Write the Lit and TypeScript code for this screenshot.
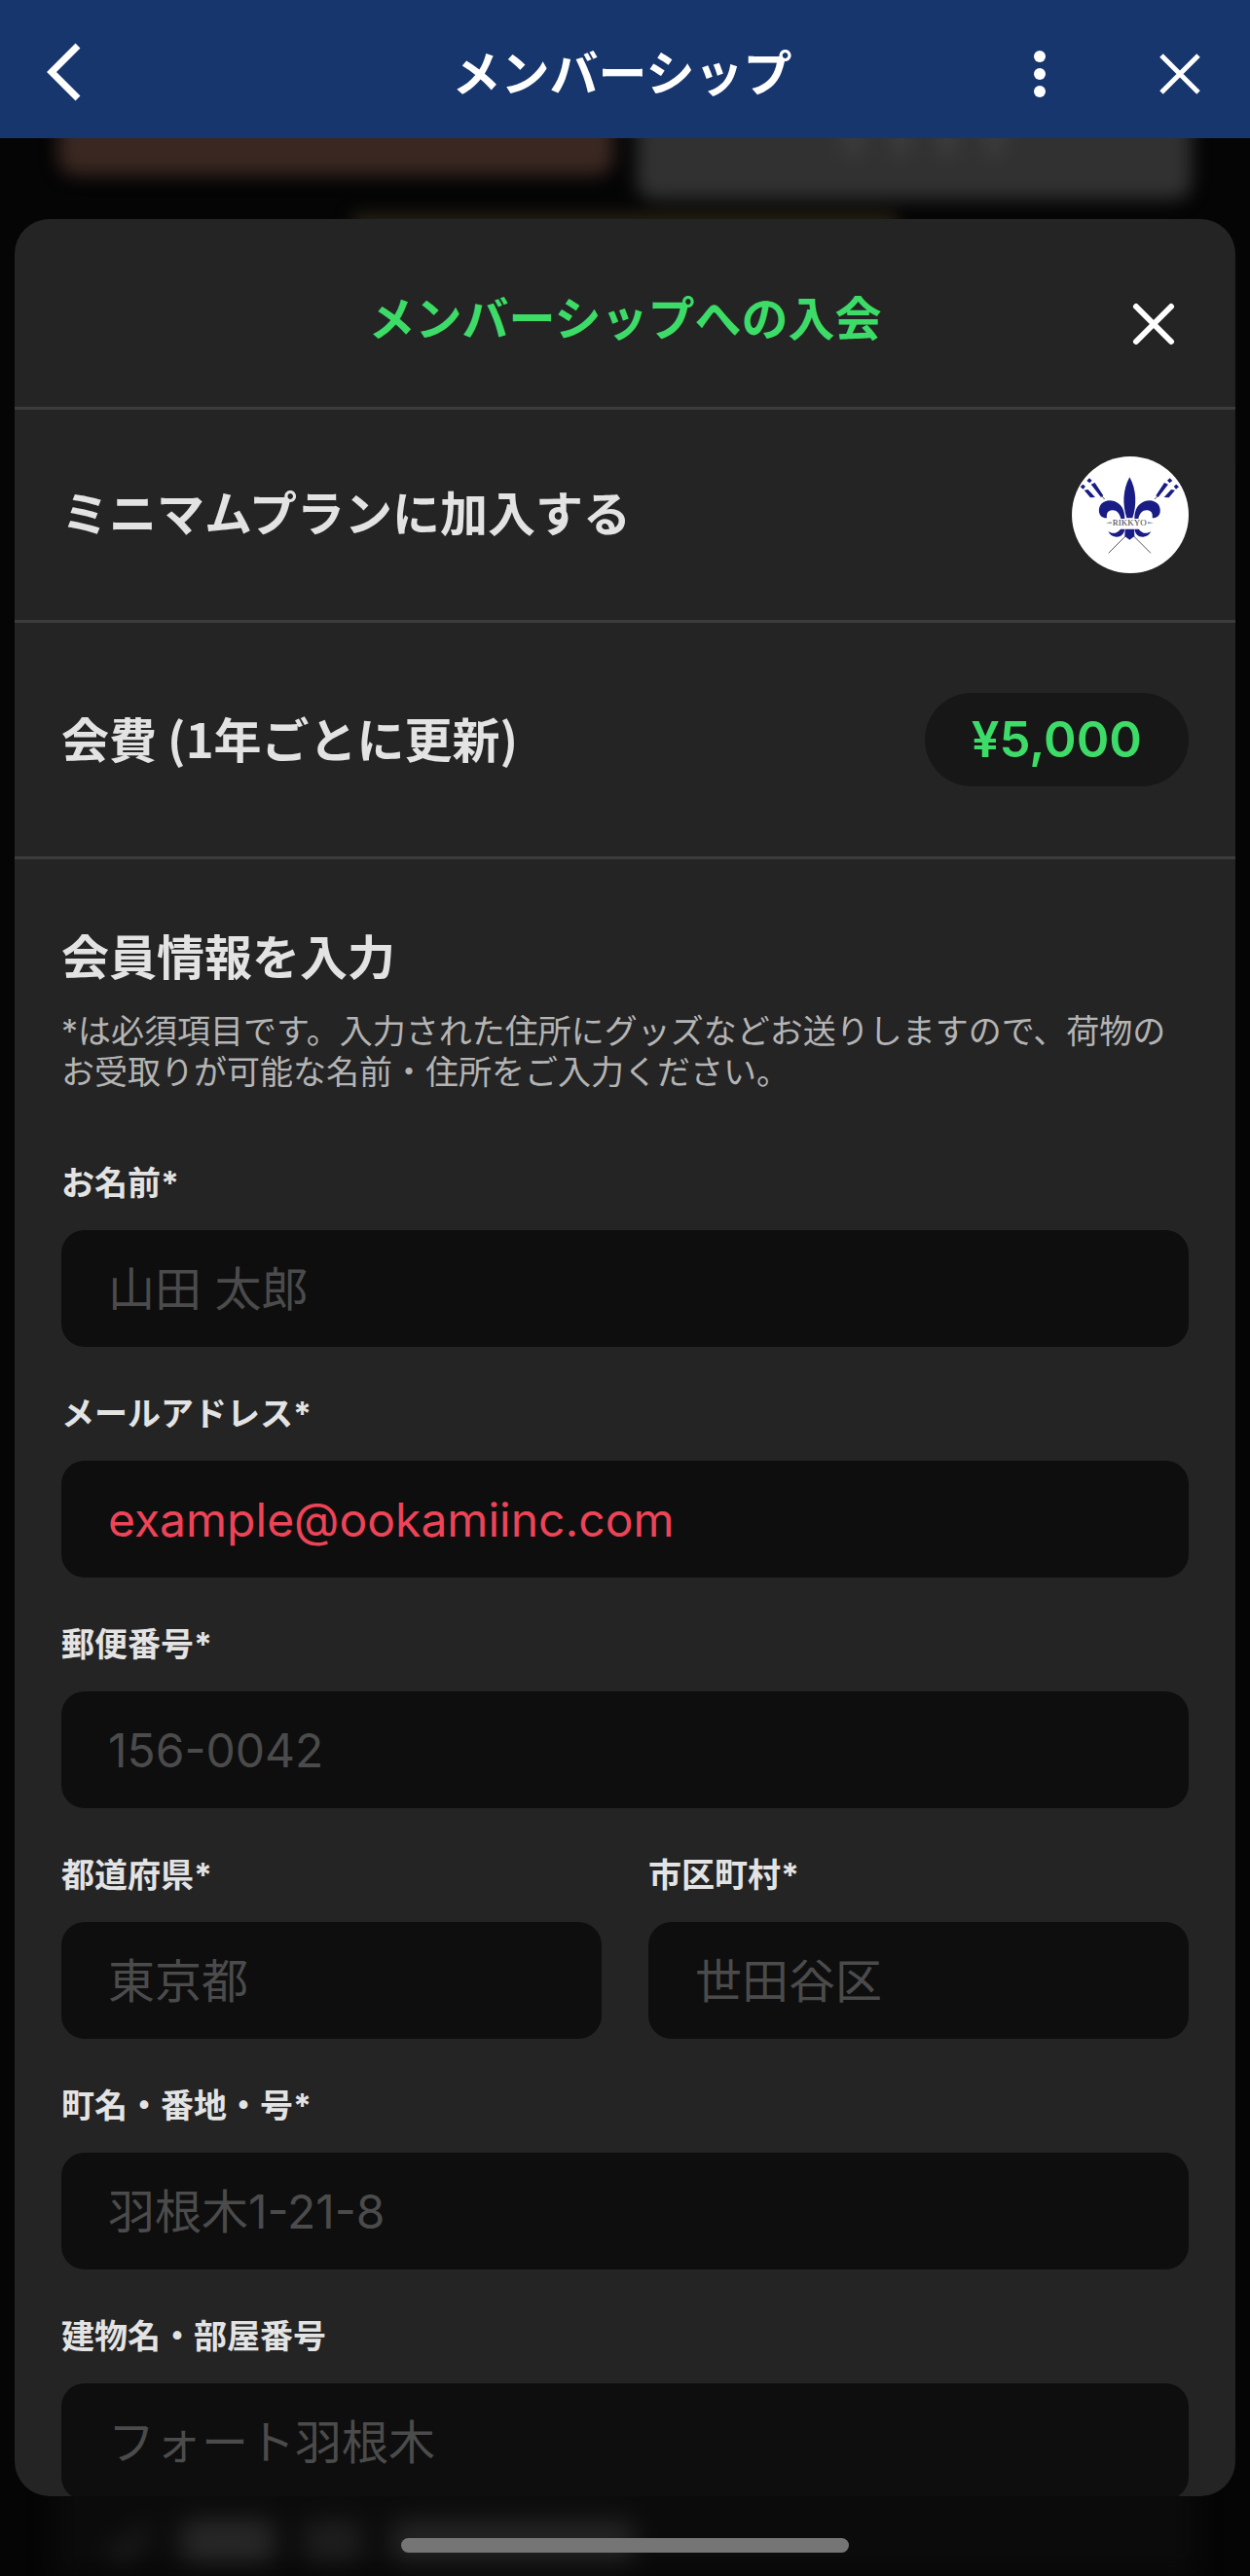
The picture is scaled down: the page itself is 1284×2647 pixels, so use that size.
import { LitElement, html, css, svg } from "lit";
import { customElement, property } from "lit/decorators.js";

@customElement("club-emblem")
class ClubEmblem extends LitElement {
  static styles = css`
    :host { display: block; width: 120px; height: 120px; flex: none; }
    .disc { display: block; width: 100%; height: 100%; }
    .ink { fill: #191c85; }
    .lance { stroke: #55565e; stroke-width: 3; }
    .name { font-family: "Liberation Serif", serif; font-size: 27px; fill: #3c3c46; text-anchor: middle; }
  `;

  render() {
    const half = svg`
      <path class="ink" d="M54 67 L62 74 L55 82 L46 75Z M34 86 L42 92 L35 101 L26 94Z"/>
      <path class="ink" d="M59 86 L71 81 L97 121 L90 126Z M38 104 L50 102 L72 126 L57 127Z"/>
      <line class="lance" x1="92" y1="122" x2="101" y2="132"/>
      <line class="lance" x1="165" y1="246" x2="113" y2="298"/>
      <path class="ink" d="M84 172 C80 145 105 129 131 138 C153 146 163 165 163 192 L151 192 C147 174 137 165 124 166 C111 167 106 176 108 190 C95 191 86 184 84 172Z"/>
      <path class="ink" d="M112 231 C125 240 140 238 150 224 L163 224 C161 239 151 249 136 248 C124 247 117 241 112 231Z"/>
      <path d="M104 205 L122 202 L122 208Z" fill="#8c8c96"/>
    `;
    return html`
      <svg class="disc" viewBox="0 0 360 360" role="img" aria-label="RIKKYO">
        <circle cx="180" cy="180" r="180" fill="#fff"/>
        <g>${half}</g>
        <g transform="translate(356 0) scale(-1 1)">${half}</g>
        <path class="ink" d="M178 64 C156 104 156 150 169 190 L187 190 C200 150 200 104 178 64Z"/>
        <path class="ink" d="M164 224 L192 224 L193 246 L178 257 L163 246Z"/>
        <text class="name" x="178" y="214">RIKKYO</text>
      </svg>
    `;
  }
}

@customElement("form-field")
class FormField extends LitElement {
  @property() label = "";
  @property() hint = "";
  @property() type = "text";
  @property({ type: Boolean }) invalid = false;

  static styles = css`
    :host { display: block; min-width: 0; }
    .field { display: flex; flex-direction: column; gap: 27px; }
    .label { font-size: 34px; line-height: 42px; font-weight: 700; color: #e3e3e3; }
    .box {
      box-sizing: border-box; width: 100%; height: 120px; padding: 0 48px;
      border: 0; border-radius: 24px; outline: 0; background: #0e0e0e; color: #e3e3e3;
      font-family: Inter, "Noto Sans CJK JP", sans-serif; font-size: 48px; font-weight: 400;
    }
    .box::placeholder { color: #4b4b4b; opacity: 1; }
    .invalid::placeholder { color: #ee4458; }
  `;

  render() {
    return html`
      <div class="field">
        <label class="label" for="control">${this.label}</label>
        <input id="control" class="box ${this.invalid ? "invalid" : ""}" type=${this.type}
          placeholder=${this.hint} aria-invalid=${this.invalid ? "true" : "false"}>
      </div>
    `;
  }
}

@customElement("app-root")
class AppRoot extends LitElement {
  static styles = css`
    :host {
      display: flex; flex-direction: column; height: 100vh; overflow: hidden;
      background: #050505; color: #e3e3e3;
      font-family: Inter, "Noto Sans CJK JP", sans-serif;
    }
    button { padding: 0; border: 0; background: none; color: #fff; cursor: pointer; }
    svg { display: block; }
    h1, h2, h3, p { margin: 0; }

    .bar {
      flex: none; box-sizing: border-box; height: 142px; padding: 10px 42px 0 36px;
      display: grid; grid-template-columns: 1fr auto 1fr; align-items: center;
      background: #17366d; color: #fff;
    }
    .bar-title { font-size: 50px; line-height: 60px; font-weight: 700; }
    .actions { display: flex; justify-content: flex-end; gap: 84px; }

    .stage { flex: 1; min-height: 0; display: grid; grid-template: minmax(0, 1fr) / minmax(0, 1fr); }
    .behind, .sheet { grid-area: 1 / 1; }

    .behind { z-index: 0; display: flex; flex-direction: column; justify-content: space-between; overflow: hidden; }
    .tiles { display: grid; grid-template-columns: 1fr 1fr; gap: 24px; padding: 0 60px; align-items: start; filter: blur(9px); }
    .tile { margin-top: -40px; height: 78px; border-radius: 18px; background: #3a2721; }
    .tile-tall { box-sizing: border-box; height: 103px; padding: 10px 0 0 20px; background: #313131; display: flex; justify-content: center; align-items: flex-start; gap: 26px; }
    .smudge { width: 22px; height: 48px; background: #3b3b3b; }
    .rule { grid-column: 1 / -1; justify-self: center; width: 48%; height: 60px; margin-top: -8px; background: #2b2616; }
    .list { margin: 0 56px; height: 200px; padding: 142px 36px 0 54px; box-sizing: border-box; background: #0b0b0c; display: flex; gap: 30px; align-items: flex-start; filter: blur(12px); }
    .tick { width: 46px; height: 46px; }
    .line { height: 44px; border-radius: 12px; background: #1d1d1d; }
    .w1 { width: 96px; background: #272727; }
    .w2 { width: 60px; }
    .w3 { width: 250px; background: #232323; }

    .sheet {
      z-index: 1; margin: 83px 15px 82px; border-radius: 36px; background: #242424;
      overflow-x: hidden; overflow-y: auto; scrollbar-width: none;
    }
    .head, .row { border-bottom: 3px solid #3c3c3c; }
    .head {
      box-sizing: border-box; height: 196px; padding: 18px 60px 0;
      display: grid; grid-template-columns: 1fr auto 1fr; align-items: center;
    }
    .head-title { grid-column: 2; padding-bottom: 6px; font-size: 48px; line-height: 60px; font-weight: 700; color: #3ddc68; }
    .close { justify-self: end; padding-top: 4px; }
    .row { display: flex; justify-content: space-between; align-items: center; padding: 48px; }
    .fee { padding-block: 72px; }
    .row-title { font-size: 49px; line-height: 60px; font-weight: 700; }
    .fee-title { padding-bottom: 4px; font-family: "Noto Sans CJK JP", sans-serif; }
    .price {
      padding: 0 48px; border-radius: 48px; background: #171717; color: #3ddc68;
      font-size: 51px; line-height: 96px; font-weight: 600;
    }
    .form { display: flex; flex-direction: column; gap: 72px; padding: 72px 48px 48px; }
    .intro { display: flex; flex-direction: column; gap: 24px; }
    .note { font-size: 34px; line-height: 42px; font-weight: 400; color: #b4b4b4; }
    .fields { display: grid; grid-template-columns: 1fr 1fr; gap: 48px; }
    .wide { grid-column: 1 / -1; }

    .home {
      position: absolute; z-index: 2; left: 50%; bottom: 24px; transform: translateX(-50%);
      width: 460px; height: 15px; border-radius: 8px; background: #757575;
    }
  `;

  render() {
    return html`
      <header class="bar">
        <div>
          <button aria-label="戻る">
            <svg width="60" height="72" viewBox="0 0 60 72" fill="none" stroke="#fff" stroke-width="7"><path d="M44 9 L17 36 L44 63"/></svg>
          </button>
        </div>
        <h1 class="bar-title">メンバーシップ</h1>
        <div class="actions">
          <button aria-label="メニュー">
            <svg width="60" height="60" viewBox="0 0 60 60" fill="#fff"><circle cx="30" cy="12" r="6"/><circle cx="30" cy="30" r="6"/><circle cx="30" cy="48" r="6"/></svg>
          </button>
          <button aria-label="閉じる">
            <svg width="60" height="60" viewBox="0 0 60 60" fill="none" stroke="#fff" stroke-width="5"><path d="M11 11 L49 49 M49 11 L11 49"/></svg>
          </button>
        </div>
      </header>
      <main class="stage">
        <div class="behind" aria-hidden="true">
          <div class="tiles">
            <div class="tile"></div>
            <div class="tile tile-tall">
              <span class="smudge"></span><span class="smudge"></span><span class="smudge"></span><span class="smudge"></span>
            </div>
            <div class="rule"></div>
          </div>
          <div class="list">
            <svg class="tick" viewBox="0 0 46 46" fill="none" stroke="#2a2a2a" stroke-width="8"><path d="M4 26 L16 38 L42 8"/></svg>
            <span class="line w1"></span><span class="line w2"></span><span class="line w3"></span>
          </div>
        </div>
        <section class="sheet" role="dialog" aria-labelledby="sheet-title">
          <div class="head">
            <h2 class="head-title" id="sheet-title">メンバーシップへの入会</h2>
            <button class="close" aria-label="閉じる">
              <svg width="48" height="48" viewBox="0 0 48 48" fill="none" stroke="#fff" stroke-width="6" stroke-linecap="round"><path d="M6 6 L42 42 M42 6 L6 42"/></svg>
            </button>
          </div>
          <div class="row">
            <h3 class="row-title">ミニマムプランに加入する</h3>
            <club-emblem></club-emblem>
          </div>
          <div class="row fee">
            <h3 class="row-title fee-title">会費 (1年ごとに更新)</h3>
            <span class="price">¥5,000</span>
          </div>
          <form class="form">
            <div class="intro">
              <h3 class="row-title">会員情報を入力</h3>
              <p class="note">*は必須項目です。入力された住所にグッズなどお送りしますので、荷物のお受取りが可能な名前・住所をご入力ください。</p>
            </div>
            <div class="fields">
              <form-field class="wide" label="お名前*" hint="山田 太郎"></form-field>
              <form-field class="wide" label="メールアドレス*" hint="example@ookamiinc.com" type="email" invalid></form-field>
              <form-field class="wide" label="郵便番号*" hint="156-0042"></form-field>
              <form-field label="都道府県*" hint="東京都"></form-field>
              <form-field label="市区町村*" hint="世田谷区"></form-field>
              <form-field class="wide" label="町名・番地・号*" hint="羽根木1-21-8"></form-field>
              <form-field class="wide" label="建物名・部屋番号" hint="フォート羽根木"></form-field>
            </div>
          </form>
        </section>
      </main>
      <div class="home"></div>
    `;
  }
}
